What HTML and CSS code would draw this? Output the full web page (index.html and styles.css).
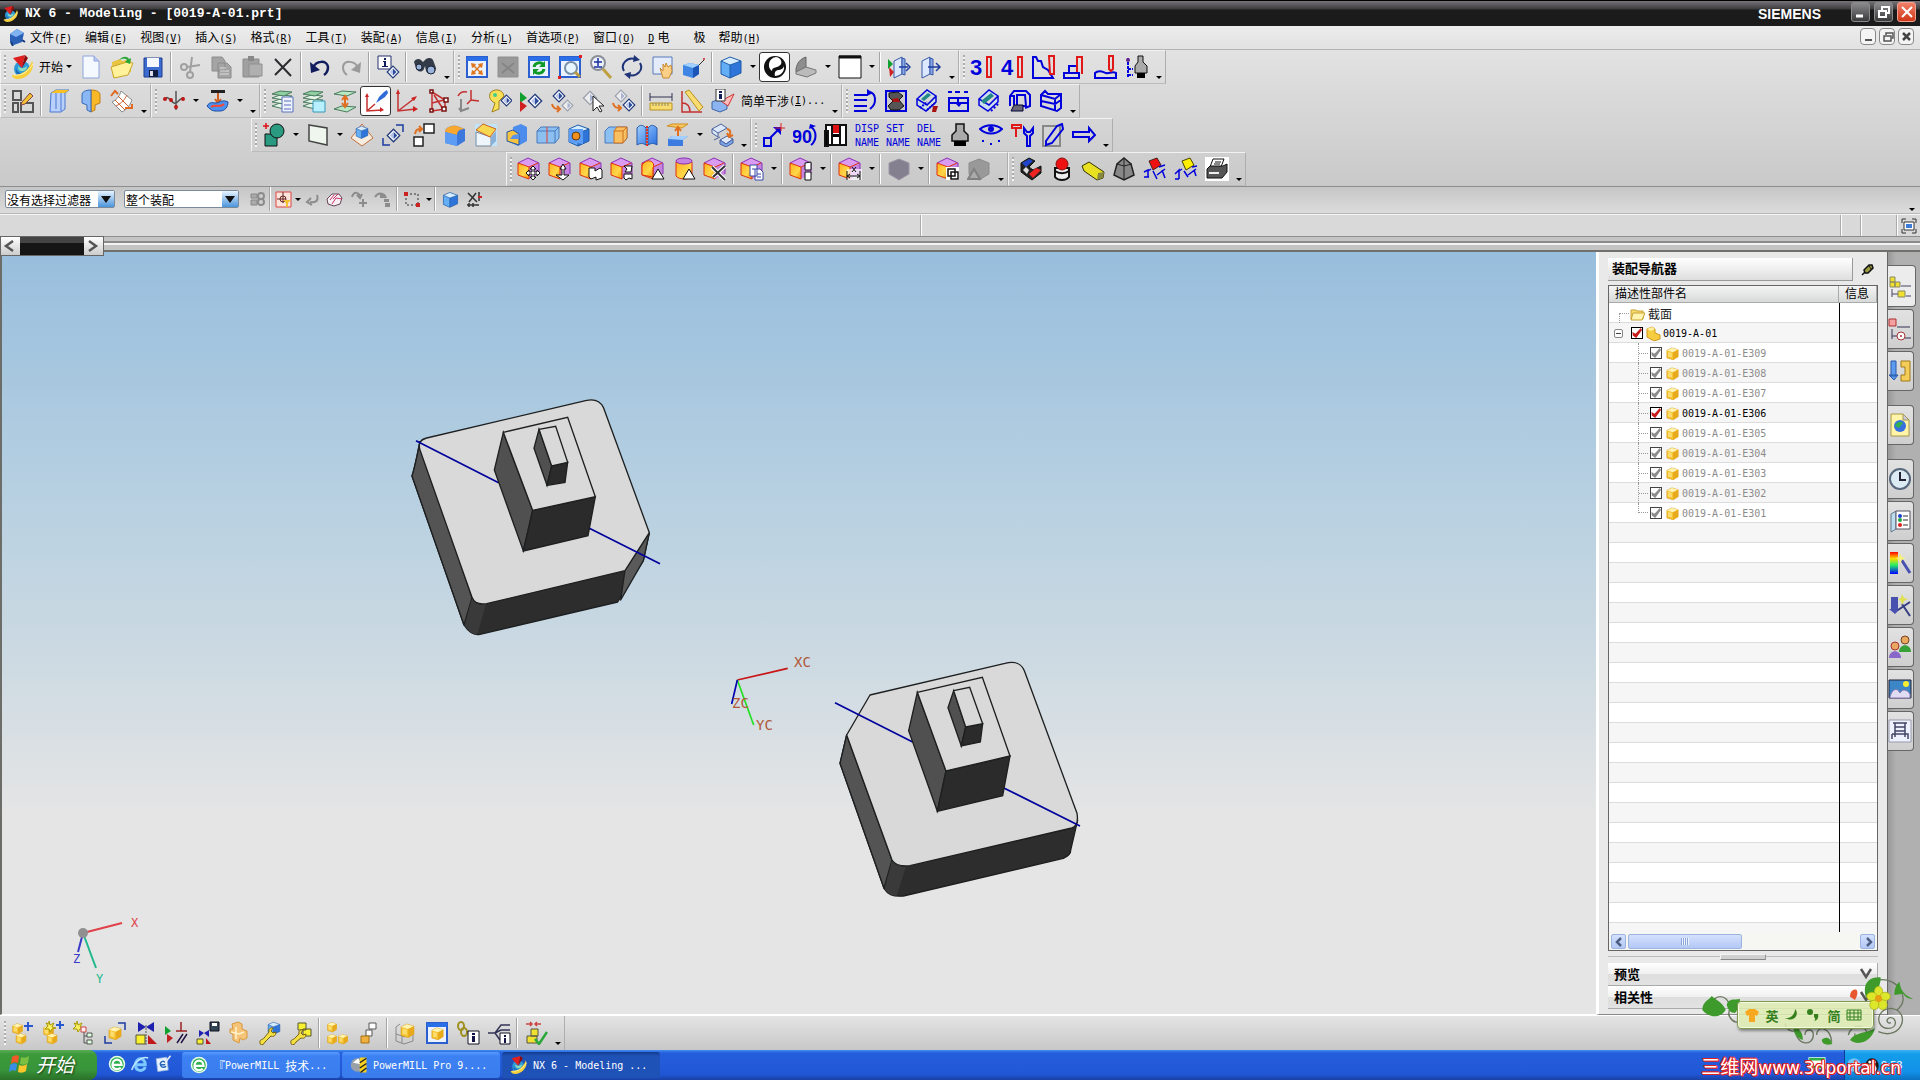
FILE: index.html
```html
<!DOCTYPE html>
<html lang="zh-CN">
<head>
  <meta charset="UTF-8">
  <meta name="viewport" content="width=device-width, initial-scale=1.0">
  <title>NX 6 - Modeling - [0019-A-01.prt]</title>
  <link rel="stylesheet" href="styles.css">
</head>
<body>
  <!-- shared icon parts, all drawn on a 24px grid -->
  <svg class="defs">
    <defs>
      <linearGradient id="gBlue" x1="0" y1="0" x2="1" y2="1"><stop offset="0" stop-color="#9fd0ff"/><stop offset="1" stop-color="#2a6fe0"/></linearGradient>
      <linearGradient id="gOrange" x1="0" y1="0" x2="1" y2="1"><stop offset="0" stop-color="#ffb020"/><stop offset=".6" stop-color="#ffd84a"/><stop offset="1" stop-color="#f09000"/></linearGradient>
      <linearGradient id="gRainbow" x1="0" y1="0" x2="0" y2="1"><stop offset="0" stop-color="#f00"/><stop offset=".3" stop-color="#fd0"/><stop offset=".6" stop-color="#2e6"/><stop offset="1" stop-color="#00f"/></linearGradient>
    </defs>
    <symbol id="nx" viewBox="0 0 24 24"><circle cx="11" cy="14" r="8" fill="#2f9ad8"/><path d="M5 13c1 5 6 7 11 4-1 4-4 5-7 4s-5-4-4-8z" fill="#1668b8"/><path d="M7 11c2 3 6 3 9 0 0 3-2 5-5 5s-4-2-4-5z" fill="#8fe0c0"/><path d="M1 20C10 21 18 15 21 6c4 8-5 18-14 18-4 0-6-2-6-4z" fill="#f6cf3a"/><path d="M3 20c8 1 15-4 19-11" fill="none" stroke="#fff4b0"/><path d="M2 3l12-3-3 13z" fill="#e02020"/><path d="M14 0l3 3-6 10z" fill="#8c0c0c"/></symbol>
    <symbol id="bcube" viewBox="0 0 24 24"><path d="M2 6l9 4v13l-9-4z" fill="#63aef5"/><path d="M11 10l11-4v12l-11 5z" fill="#2f74d8"/><path d="M2 6l9-4 11 4-11 4z" fill="#d6ecff"/><path d="M2 6l9-4 11 4v12l-11 5-9-4zM2 6l9 4 11-4M11 10v13" fill="none" stroke="#1d5cab"/></symbol>
    <symbol id="obox" viewBox="0 0 24 24"><path d="M1 6l10-5 11 5-10 4z" fill="#d99cf0"/><path d="M12 10l10-4v11l-10 5z" fill="#c583e2"/><path d="M1 6l11 4v12L1 18z" fill="url(#gOrange)"/><path d="M1 6l10-5 11 5v11" fill="none" stroke="#8b2fb5"/><path d="M1 6l11 4v12L1 18zM12 10l9-4" fill="none" stroke="#e03010"/></symbol>
    <symbol id="ycube" viewBox="0 0 24 24"><path d="M3 7l8-4 10 3v11l-8 5-10-3z" fill="#f5c430" stroke="#d79a14"/><path d="M3 7l8-4 10 3-8 4z" fill="#fff3b4"/><path d="M13 10l8-4v11l-8 5z" fill="#e9a91c"/><path d="M5 9l6 2v7l-6-1z" fill="#fbdc70"/></symbol>
    <symbol id="dia" viewBox="0 0 24 24"><path d="M12 2l10 10-10 10L2 12z" fill="#fff" stroke="#223a7a" stroke-width="2"/><path d="M12 6l6 6-6 6z" fill="#2c4c9c"/><path d="M12 6v12l-6-6z" fill="#b8c4e8"/></symbol>
    <symbol id="diag" viewBox="0 0 24 24"><path d="M12 2l10 10-10 10L2 12z" fill="#eee" stroke="#9aa0ae" stroke-width="2"/><path d="M12 6l6 6-6 6z" fill="#a8b2d4"/></symbol>
    <symbol id="layers" viewBox="0 0 24 24"><g fill="#e4f4e8" stroke="#4a7a5c"><path d="M1 17l8-3 12 1-8 5z"/><path d="M1 13l8-3 12 1-8 4z"/><path d="M1 9l8-3 12 1-8 4z"/><path d="M1 5l8-3 12 1-8 4z" fill="#8ed0a4"/></g></symbol>
    <symbol id="win" viewBox="0 0 24 24"><path d="M2 2h20v20H2z" fill="#eaf3ff" stroke="#2b5fd0" stroke-width="2"/><path d="M2 2h20v4H2z" fill="#2b6fe8"/></symbol>
    <symbol id="ie" viewBox="0 0 24 24"><circle cx="12" cy="12" r="11" fill="#e8ffe8"/><circle cx="12" cy="12" r="9" fill="#30b050"/><path d="M6 13h12c0-9-12-9-12 0 0 7 8 7 11 4" fill="none" stroke="#fff" stroke-width="3"/></symbol>
  </svg>

  <header class="titlebar">
    <svg class="app-icon"><use href="#nx"/></svg>
    <h1>NX 6 - Modeling - [0019-A-01.prt]</h1>
    <span class="brand">SIEMENS</span>
    <div class="win-buttons">
      <button title="Minimize"><svg><path d="M5 14h7" stroke="#fff" stroke-width="3"/></svg></button>
      <button title="Restore"><svg><path d="M5 9h7v6H5zM8 8V5h7v6h-2" fill="none" stroke="#fff" stroke-width="2"/></svg></button>
      <button class="close" title="Close"><svg><path d="M5 5l10 10M15 5L5 15" stroke="#fff" stroke-width="2"/></svg></button>
    </div>
  </header>

  <nav class="menubar">
    <svg class="menu-icon"><path d="M2 6l7-5 7 4-2 9-8 3-4-3z" fill="#2b62b8"/><path d="M2 6l7-5 7 4-8 4z" fill="#7fb2ee"/><path d="M3 14l2 4M14 12l3 2" stroke="#123a78" stroke-width="2"/></svg>
    <a href="#">文件<span>(<u>F</u>)</span></a>
    <a href="#">编辑<span>(<u>E</u>)</span></a>
    <a href="#">视图<span>(<u>V</u>)</span></a>
    <a href="#">插入<span>(<u>S</u>)</span></a>
    <a href="#">格式<span>(<u>R</u>)</span></a>
    <a href="#">工具<span>(<u>T</u>)</span></a>
    <a href="#">装配<span>(<u>A</u>)</span></a>
    <a href="#">信息<span>(<u>I</u>)</span></a>
    <a href="#">分析<span>(<u>L</u>)</span></a>
    <a href="#">首选项<span>(<u>P</u>)</span></a>
    <a href="#">窗口<span>(<u>O</u>)</span></a>
    <a href="#" class="wide"><span><u>D</u></span> 电</a>
    <a href="#">极</a>
    <a href="#">帮助<span>(<u>H</u>)</span></a>
    <div class="mdi-buttons">
      <button title="Minimize"><svg><path d="M4 11h7" stroke="#555" stroke-width="2"/></svg></button>
      <button title="Restore"><svg><path d="M4 7h7v5H4zM6 6V4h7v5h-1" fill="none" stroke="#555" stroke-width="1.5"/></svg></button>
      <button title="Close"><svg><path d="M4 4l7 7M11 4l-7 7" stroke="#444" stroke-width="2.5"/></svg></button>
    </div>
  </nav>

  <div class="dock">
    <div class="dock-row">
      <!-- standard -->
      <div class="toolbar">
        <button class="tool"><svg><use href="#nx"/></svg></button>
        <button class="label-tool start-app">开始<i></i></button>
        <button class="tool" title="New"><svg><path d="M4 1h11l5 5v17H4z" fill="#f4f8ff" stroke="#8fa4dc"/><path d="M15 1v5h5" fill="#b8c8f4" stroke="#8fa4dc"/></svg></button>
        <button class="tool" title="Open"><svg><path d="M2 7l8-3 2 2 9-2v13L3 23z" fill="#e8c440"/><path d="M1 12l16-5 6 1-5 12-14 3z" fill="#fff29a" stroke="#c9a42c"/><path d="M9 5c4-4 8-4 10-1l2-1-1 6-5-2 2-2c-2-2-5-1-8 0z" fill="#28a838"/></svg></button>
        <button class="tool" title="Save"><svg><path d="M3 3h18v19H3z" fill="#3c6cd0" stroke="#1e3c8c"/><path d="M6 3h12v9H6z" fill="#f4f8fc"/><path d="M8 15h9v7H8z" fill="#111c3c"/><path d="M9 16h3v5H9z" fill="#dde"/></svg></button>
        <i class="sep"></i>
        <button class="tool" title="Cut"><svg><g fill="none" stroke="#a0a0a0" stroke-width="2"><circle cx="6" cy="12" r="3"/><circle cx="12" cy="20" r="3"/><path d="M12 17L14 2M9 12l13-2"/></g></svg></button>
        <button class="tool" title="Copy"><svg><path d="M3 2h10l3 4v10H3zM9 8h9l4 4v11H9z" fill="#a4a4a4" stroke="#8c8c8c"/><path d="M11 13h6M11 16h9M11 19h9" stroke="#ddd"/></svg></button>
        <button class="tool" title="Paste"><svg><path d="M3 4h16v18H3z" fill="#a0a0a0" stroke="#8c8c8c"/><path d="M8 1h6v5H8z" fill="#888"/><path d="M9 9h13v12H9z" fill="#b0b0b0" stroke="#909090"/></svg></button>
        <button class="tool" title="Delete"><svg><path d="M4 4l16 17M20 4L4 20" stroke="#2c2c30" stroke-width="2"/></svg></button>
        <i class="sep"></i>
        <button class="tool" title="Undo"><svg><path d="M5 13c3-8 14-8 15-1 0 4-1 6-4 8" fill="none" stroke="#101c5c" stroke-width="2.5"/><path d="M2 7l1 11 9-3z" fill="#101c5c"/></svg></button>
        <button class="tool" title="Redo"><svg><path d="M19 13C16 5 5 5 4 12c0 4 1 6 4 8" fill="none" stroke="#9a9a9a" stroke-width="2"/><path d="M22 7l-1 11-9-3z" fill="#9a9a9a"/></svg></button>
        <i class="sep"></i>
        <button class="tool"><svg><path d="M2 1h13v13H2z" fill="#fff" stroke="#25306c"/><path d="M8 3h2v2H8zM7 6h3v5h2v1H6v-1h2V7H7z" fill="#101c5c"/><svg x="10" y="10" width="14" height="14"><use href="#dia"/></svg></svg></button>
        <i class="sep"></i>
        <button class="tool"><svg><path d="M1 7c1-3 5-4 7-2l2 2 3-3c3-2 6-1 7 1l3 8c0 6-8 8-10 3l-1-5-1 3c-2 4-7 3-8-1z" fill="#333a48"/><circle cx="18" cy="15" r="4" fill="#9ab4dc" stroke="#1c2434"/><circle cx="6" cy="12" r="3" fill="#9ab4dc" stroke="#1c2434"/></svg></button>
        <button class="more"></button>
      </div>
      <!-- view -->
      <div class="toolbar">
        <button class="tool" title="Fit"><svg><use href="#win"/><path d="M6 8l5 1-1 2 2 2 2-2-1-2 5-1-1 5-2-1-2 2 2 2 2-1 1 5-5-1 1-2-2-2-2 2 1 2-5 1 1-5 2 1 2-2-2-2-2 1z" fill="#e07820"/></svg></button>
        <button class="tool"><svg><path d="M2 2h20v20H2z" fill="#999" stroke="#909090"/><path d="M6 8l12 10M18 8L6 18" stroke="#868686" stroke-width="2"/></svg></button>
        <button class="tool"><svg><use href="#win"/><path d="M7 12c1-5 7-5 9-3M17 14c-1 5-7 5-9 3" fill="none" stroke="#109a28" stroke-width="3"/><path d="M18 6v6h-6zM6 20v-6h6z" fill="#109a28"/></svg></button>
        <button class="tool"><svg><use href="#win"/><circle cx="13" cy="13" r="6" fill="#e8f6ff" stroke="#7890a8" stroke-width="2"/><path d="M17 17l5 5" stroke="#b89a40" stroke-width="3"/><path d="M0 21h3v3H0zM21 0h3v3h-3z" fill="#e02020"/></svg></button>
        <button class="tool"><svg><circle cx="9" cy="8" r="7" fill="#eef2fa" stroke="#8a8f98" stroke-width="2"/><path d="M5 7h8M9 3v8M5 12h8" stroke="#1830a0" stroke-width="1.5"/><path d="M14 14l8 9" stroke="#bfa040" stroke-width="3"/></svg></button>
        <button class="tool"><svg><path d="M4 16C0 9 7 2 15 4M20 8c4 7-3 14-11 12" fill="none" stroke="#1f3478" stroke-width="2"/><path d="M14 0l6 5-7 2zM10 24l-6-5 7-2z" fill="#1f3478"/></svg></button>
        <button class="tool"><svg><path d="M2 2h19v17H2z" fill="#e4ecfc" stroke="#5878b8"/><path d="M9 13l3 3V9l2 3 1-4 2 4 3-2 1 6-3 7h-6z" fill="#fbcf88" stroke="#c88a30"/></svg></button>
        <button class="tool"><svg><path d="M1 10l7-2 9 2v9l-6 4-10-3z" fill="#3f86e4"/><path d="M1 10l7-2 9 2-6 3z" fill="#9fd0ff"/><path d="M17 10v9l-6 4V13z" fill="#1c54b8"/><path d="M17 10l5-5" stroke="#333"/><circle cx="22" cy="4" r="1" fill="#d02020"/></svg></button>
        <i class="sep"></i>
        <button class="tool"><svg><use href="#bcube"/></svg></button>
        <button class="dd"></button>
        <button class="tool on"><svg><circle cx="12" cy="12" r="11" fill="#111"/><path d="M13 2c6 1 7 7 3 9-3 2-7 1-7 5-5-3-4-13 4-14z" fill="#fff"/><path d="M21 11c1 6-4 10-9 10-1-4 1-6 4-6 3-1 4-1 5-4z" fill="#fff"/></svg></button>
        <button class="tool"><svg><path d="M2 14c1-6 4-10 10-12v10l-10 5z" fill="#8e8e8e" stroke="#666"/><path d="M2 17l10-5 10 3v3l-9 4-11-3z" fill="#bbb" stroke="#777"/></svg></button>
        <button class="dd"></button>
        <button class="tool"><svg><path d="M1 1h22v22H1z" fill="#fff" stroke="#111"/><path d="M1 2h22" stroke="#111" stroke-width="3"/></svg></button>
        <button class="dd"></button>
        <i class="sep"></i>
        <button class="tool"><svg><path d="M7 6l8-4v17l-8 4z" fill="#dce8ff" stroke="#3858a8"/><path d="M15 3l3 1v16l-3-1z" fill="#88a8e8" stroke="#3858a8"/><path d="M1 4l5 5-5 5z" fill="#10a030"/><path d="M2 12l5 5-4 5z" fill="#d02020"/><path d="M12 12h9M19 8l4 4-4 4" class="b1"/></svg></button>
        <button class="tool"><svg><path d="M4 6l8-4v17l-8 4z" fill="#dce8ff" stroke="#3858a8"/><path d="M12 3l3 1v16l-3-1z" fill="#88a8e8" stroke="#3858a8"/><path d="M10 12h11M18 8l4 4-4 4" class="b1"/></svg></button>
        <button class="more"></button>
      </div>
      <!-- electrode macros -->
      <div class="toolbar">
        <button class="tool"><svg><text x="0" y="20" class="num">3</text><path d="M17 2h4v20h-4z" class="r"/></svg></button>
        <button class="tool"><svg><text x="0" y="20" class="num">4</text><path d="M17 2h4v20h-4z" class="r"/></svg></button>
        <button class="tool"><svg><path d="M1 23V2h3l2 4h3l2 6 5 3 5 8z" class="b"/><path d="M17 1h5v18h-4z" class="r"/></svg></button>
        <button class="tool"><svg><path d="M1 23h15v-5H1zM6 18v-7h8v7" class="b"/><path d="M14 17V2h5v17" class="r"/></svg></button>
        <button class="tool"><svg><path d="M1 23v-5c4-4 8-1 11 0s6-2 10 0v5z" class="b"/><path d="M15 1h4v13l-2 2-2-2z" class="r"/></svg></button>
        <button class="tool"><svg><path d="M3 3v20M3 14h5M3 20h5" class="b" stroke-dasharray="3 1"/><circle cx="3" cy="5" r="2" fill="#628"/><path d="M13 1h5v6l4 4v7H10v-7l3-4z" fill="#aaa" class="k"/><path d="M12 18h8v5h-8z"/></svg></button>
        <button class="more"></button>
      </div>
    </div>

    <div class="dock-row">
      <!-- feature -->
      <div class="toolbar">
        <button class="tool"><svg><path d="M2 2h8v9H2zM2 14h5v9H2zM10 14h12v9H10z" fill="none" stroke="#555" stroke-width="2"/><path d="M11 13l8-9 3 3-8 8-4 1z" fill="#f0c030" stroke="#844"/></svg></button>
        <i class="sep"></i>
        <button class="tool"><svg><path d="M3 4l5-3h13l-4 3v16l-4 3H2z" fill="#b8d0fa" stroke="#4878d0"/><path d="M3 4l5-3h13l-4 3z" fill="#f8c020"/><path d="M8 4v16M13 4v18" stroke="#4878d0"/></svg></button>
        <button class="tool"><svg><path d="M12 1c6 0 9 2 9 5v8l-5 2v5l-4 2z" fill="#f8b828" stroke="#c08018"/><path d="M12 1C6 1 3 3 3 6v8l5 2v5l4 2z" fill="#8ab8f4" stroke="#3868b8"/></svg></button>
        <button class="tool"><svg><path d="M2 13C8 10 10 6 11 2l11 9c-2 6-6 10-10 12z" fill="#fff" stroke="#888"/><path d="M5 11l10 10M8 7l10 10M6 17C12 14 15 10 17 6" fill="none" stroke="#d06030"/><path d="M1 7l4-5 3 3M15 19h7v-4" stroke="#e06820" stroke-width="2" fill="none"/></svg></button>
        <button class="more"></button>
      </div>
      <!-- curves -->
      <div class="toolbar">
        <button class="tool"><svg><path d="M2 11c4-6 6 1 10 3s4-5 10-5M14 2v19" fill="none" stroke="#555" stroke-width="1.5"/><g fill="#c01818"><circle cx="3" cy="10" r="2"/><circle cx="9" cy="11" r="2"/><circle cx="21" cy="10" r="2"/><circle cx="14" cy="18" r="2"/></g></svg></button>
        <button class="dd"></button>
        <button class="tool"><svg><path d="M5 1h14v3H5z" fill="#222"/><path d="M12 4v8M9 10l3 4 3-4" stroke="#d06020" stroke-width="2" fill="none"/><path d="M1 17c3-5 6-3 9-3s6-4 12-1c0 5-3 9-8 9s-8 1-13-5z" fill="#4c90f0" stroke="#1c4ca0"/><path d="M5 18c4-3 9 1 13-3" fill="none" stroke="#f84830" stroke-width="2"/></svg></button>
        <button class="dd"></button>
        <button class="more"></button>
      </div>
      <!-- utility -->
      <div class="toolbar">
        <button class="tool"><svg><use href="#layers"/><path d="M11 8h11v15H11z" fill="#eef2ff" stroke="#5870b8"/><path d="M13 12h7M13 16h7M13 20h7" stroke="#5870b8"/></svg></button>
        <button class="tool"><svg><use href="#layers"/><path d="M11 12h12v11H11z" fill="#b8f0ff" stroke="#3898b8"/></svg></button>
        <button class="tool"><svg><path d="M1 5l8-3 14 1-9 4zM1 20l8-3 14 1-9 5z" fill="#b8e8c4" stroke="#4a7a5c"/><path d="M12 7v10M9 11l3-4 3 4M9 14l3 4 3-4" class="o1"/></svg></button>
        <button class="tool on"><svg><path d="M3 7v15l15-1M3 22l8-7" class="r1"/><path d="M3 4L1 8h4zM20 21l-4-3v5z" fill="#c22"/><path d="M12 14l3-6 5-5 3-2 1 3-3 4z" fill="#2f6cd8"/></svg></button>
        <button class="tool"><svg><path d="M3 3v19l18-2M3 22L20 9" class="r1"/><path d="M3 0L1 5h4zM23 20l-5-3v6zM22 7l-6 2 3 3z" fill="#c22"/></svg></button>
        <button class="tool"><svg><path d="M6 3v19M6 3l13 8M6 22l13-2M19 10v10M8 6l9 14M6 14l12-3" class="r1"/><g fill="#fff" stroke="#711" stroke-width="1.5"><path d="M4 1h3v3H4zM4 20h3v3H4zM18 9h4v4h-4zM16 18h4v4h-4z"/></g></svg></button>
        <button class="tool"><svg><path d="M14 1v10l8 1M14 11l-4 4M1 7c2-4 5-5 9-4" class="r1"/><path d="M4 10v12l8-3M4 22l-2-3" fill="none" stroke="#888" stroke-width="2"/></svg></button>
        <button class="tool"><svg><path d="M3 3c5-4 12-2 13 4l-5 5v8l-7 3 3-9c-5-2-7-7-4-11z" fill="#f8e058" stroke="#a08018"/><circle cx="7" cy="6" r="2" fill="#4c8"/><svg x="12" y="5" width="13" height="13"><use href="#dia"/></svg></svg></button>
        <button class="tool"><svg><path d="M1 3l7 6-7 5z" fill="#10a030"/><path d="M1 12l7 5-7 6z" fill="#d02020"/><svg x="8" y="4" width="16" height="16"><use href="#dia"/></svg></svg></button>
        <button class="tool"><svg><svg x="2" y="0" width="14" height="14"><use href="#dia"/></svg><svg x="11" y="10" width="13" height="13"><use href="#diag"/></svg><path d="M2 15c1 5 4 5 8 5M7 17l3 3-3 3" class="o1"/></svg></button>
        <button class="tool"><svg><svg x="1" y="1" width="16" height="16"><use href="#diag"/></svg><path d="M12 7v15l4-4 3 5 2-1-3-5h5z" fill="#fff" stroke="#222"/></svg></button>
        <button class="tool"><svg><svg x="2" y="0" width="14" height="14"><use href="#diag"/></svg><svg x="10" y="9" width="14" height="14"><use href="#dia"/></svg><path d="M1 14c1 5 4 5 8 5M6 16l3 3-3 3" class="o1"/></svg></button>
        <i class="sep"></i>
        <button class="tool"><svg><path d="M1 14h22v7H1z" fill="#f8dc70" stroke="#b89020"/><path d="M4 14v3M7 14v3M10 14v3M13 14v3M16 14v3M19 14v3" stroke="#886"/><path d="M1 8h22M1 4v8M23 4v8" stroke="#335" /></svg></button>
        <button class="tool"><svg><path d="M2 2v21h20M2 14c5 0 8 3 8 9" class="r1"/><path d="M5 3l4-2 14 17-4 4z" fill="#f8dc70" stroke="#b89020"/></svg></button>
        <button class="tool"><svg><path d="M1 13l7-3 8 3v7l-7 3-8-3z" fill="#8cb4f0" stroke="#3c64a8"/><path d="M10 12l13-7-6 12z" fill="#fbb" stroke="#c33"/><path d="M5 0h9v12H5z" fill="#fff" stroke="#333"/><path d="M8 2h3v2H8zM8 5h3v5H8z" fill="#101c5c"/></svg></button>
        <button class="label-tool clash">简单干涉<span>(<u>I</u>)...</span></button>
        <button class="more"></button>
      </div>
      <div class="toolbar">
        <button class="tool"><svg><path d="M1 6h14M1 11h13M1 17h13M1 22h13M15 3c9 0 9 12 2 17" class="b"/><path d="M14 0v7l6-3z" fill="#00d"/></svg></button>
        <button class="tool"><svg><path d="M2 2h20v20H2z" fill="#ccc" stroke="#0000dc" stroke-width="2"/><path d="M5 4l9-1 5 4-4 4 5 6-5 4H7l-3-4 5-5-4-4z" fill="#555" stroke="#111"/><path d="M8 10l6-1 2 4H9z" fill="#a11"/></svg></button>
        <button class="tool"><svg><path d="M2 10L12 1l9 6-9 9zM2 10v6l9 6 10-9V7" fill="#cdd" stroke="#0000dc" stroke-width="1.5"/><path d="M6 10l7-6 3 2-7 6z" fill="#288"/><path d="M5 19l7-6M12 21l8-7" class="b" stroke-dasharray="2 1"/><path d="M18 17h5l-2 6h-4z" fill="#a11"/></svg></button>
        <button class="tool"><svg><path d="M3 9h19v13H3zM3 14h19M2 3h4M9 3h5M18 3h4M12 9v7" class="b"/><path d="M9 14h7l-3 4z" fill="#00d"/></svg></button>
        <button class="tool"><svg><path d="M2 10L12 1l9 6-9 9zM2 10v6l9 6 10-9V7" fill="#cde" stroke="#0000dc" stroke-width="1.5"/><path d="M4 12l10-8 3 3L7 15z" fill="#288"/><path d="M14 22l8-8" class="b" stroke-dasharray="2 2"/></svg></button>
        <button class="tool"><svg><path d="M2 17V7l4-5h12l4 4v11l-5 2M2 7h4v9M9 16V6h8l1 11h-7" class="b"/><path d="M3 22l3-6h9v6z" fill="#667" stroke="#003"/></svg></button>
        <button class="tool"><svg><path d="M2 6l4-4 3 3h13v14l-4 3-16-5zM2 6l14 4 6-5M2 12l14 3 6-4M16 10v11" class="b"/></svg></button>
        <button class="more"></button>
      </div>
    </div>

    <div class="dock-row third">
      <div class="toolbar">
        <button class="tool"><svg><path d="M1 3h6M4 0v6" stroke="#d11" stroke-width="1.5"/><path d="M3 11h12v12H3z" fill="#2a9a80" stroke="#111"/><circle cx="15" cy="8" r="7" fill="#2a9a80" stroke="#111"/></svg></button>
        <button class="dd"></button>
        <button class="tool"><svg><path d="M3 2l18 3v17L3 18z" fill="#eef6ee" stroke="#444" stroke-width="1.5"/></svg></button>
        <button class="dd"></button>
        <button class="tool"><svg><path d="M1 15L12 1l11 14-11 8z" fill="#f6ece0" stroke="#c07040"/><svg x="5" y="2" width="14" height="14"><use href="#bcube"/></svg></svg></button>
        <button class="tool"><svg><svg x="5" y="5" width="15" height="15"><use href="#dia"/></svg><path d="M15 2h7v7M2 15v7h7" class="b1"/></svg></button>
        <button class="tool"><svg><path d="M12 1h10v9H12zM2 14h9v9H2z" fill="#fff" stroke="#222" stroke-width="1.5"/><path d="M3 11c1-5 3-5 6-5M7 3l3 3-3 3" class="o1"/></svg></button>
        <button class="tool"><svg><path d="M2 9c0-5 7-7 12-6l8 3v12l-8 5-12-3z" fill="#3c78dc"/><path d="M2 9c0-5 7-7 12-6l8 3c-5 0-8 2-8 6z" fill="#f8a830"/><path d="M2 9l12 3v11L2 20z" fill="#5c9cf4"/></svg></button>
        <button class="tool"><svg><path d="M1 1h22v22H1z" fill="#bfe4fb"/><path d="M2 9v14h15V14z" fill="#eef6fc" stroke="#789"/><path d="M17 14l5-6v10l-5 5z" fill="#8ab0d8"/><path d="M2 7l7-6 13 5-6 8z" fill="#f8d850" stroke="#d06020"/></svg></button>
        <button class="tool"><svg><path d="M2 9l6 3V4l8-3 6 3v14l-9 5-11-5z" fill="#4c8cec"/><path d="M2 9l6-2 6 4v11L2 18z" fill="#f8c440" stroke="#2858a0"/><path d="M8 12l6-1v5H5z" fill="#5a92e8"/></svg></button>
        <button class="tool"><svg><path d="M1 8l4-4h18v11l-4 5H1z" fill="#8cc0f0" stroke="#4878c0"/><path d="M1 8h18l4-4M19 8v12" fill="none" stroke="#4878c0"/><path d="M11 4v16" stroke="#e04030"/></svg></button>
        <button class="tool"><svg><use href="#bcube"/><path d="M2 6h14v15l-14-2z" fill="#5c9cf4"/><circle cx="9" cy="13" r="4" fill="#f09020" stroke="#6a3a10"/></svg></button>
        <i class="sep"></i>
        <button class="tool"><svg><path d="M1 8l4-4h18v11l-4 5H1z" fill="#8cc0f0" stroke="#4878c0"/><path d="M10 8l3-4h10v11l-4 5h-9z" fill="#f8c060" stroke="#d07020"/><path d="M10 8h9l4-4M19 8v12" stroke="#d07020" fill="none"/></svg></button>
        <button class="tool"><svg><path d="M2 5c3-4 6-3 9 0v17c-3-2-6-2-9 0zM13 5c3-4 6-3 9 0v17c-3-2-6-2-9 0z" fill="url(#gBlue)" stroke="#2858a8"/><path d="M12 3v20" stroke="#e03020" stroke-dasharray="2 1" stroke-width="2"/></svg></button>
        <button class="tool"><svg><path d="M1 3l5-2h16l-6 4z" fill="#f8c860" stroke="#d09020"/><path d="M12 5v9M9 8l3-4 3 4" class="o1"/><path d="M2 16l4-3h16l-5 4v6H2z" fill="#3c7ce0"/><path d="M2 16l4-3h16l-5 4z" fill="#a4d0ff"/></svg></button>
        <button class="dd"></button>
        <button class="tool"><svg><path d="M2 6l9-5 6 4-9 5zM2 6v4l6 4v-4M10 17l7-4 6 3-7 5zM4 17l6-3" fill="#dde8fa" stroke="#48609c"/><path d="M10 17v4l6 3 7-4v-4l-7 5z" fill="#7ca4e8" stroke="#48609c"/><path d="M17 6c4 1 4 4 2 7M17 10l2 4 4-2" class="o1"/></svg></button>
        <button class="more"></button>
      </div>
      <div class="toolbar">
        <button class="tool"><svg><path d="M2 15h7v8H2zM8 15l8-8" class="b"/><path d="M11 4h8v8z" fill="#00d"/><path d="M13 5h10M19 0v8" stroke="#d22"/></svg></button>
        <button class="tool"><svg><text x="-1" y="20" class="ninety">90</text><path d="M18 4c6 4 6 13 0 18" class="b"/><path d="M16 6l1-5 6 2z" fill="#00d"/></svg></button>
        <button class="tool"><svg><path d="M2 2h20v20H2z" fill="#fff" stroke="#111" stroke-width="2"/><path d="M1 8h3v15H1zM8 2v20M16 2v20" stroke="#111" stroke-width="2"/><path d="M9 2h6v8H9z" fill="#d11"/><path d="M9 11h6v3H9z"/></svg></button>
        <button class="tool"><svg class="words"><text x="0" y="9">DISP</text><text x="0" y="23">NAME</text></svg></button>
        <button class="tool"><svg class="words"><text x="0" y="9">SET</text><text x="0" y="23">NAME</text></svg></button>
        <button class="tool"><svg class="words"><text x="0" y="9">DEL</text><text x="0" y="23">NAME</text></svg></button>
        <button class="tool"><svg><path d="M8 1h8v7l4 4v6H4v-6l4-4z" fill="#aaa" stroke="#111" stroke-width="1.5"/><path d="M6 18h12v5H6z"/></svg></button>
        <button class="tool"><svg><path d="M1 6c6-5 16-5 22 0-6 6-16 6-22 0zM3 18h2M11 21h2M19 18h2" class="b"/><circle cx="12" cy="6" r="3" fill="#00d"/></svg></button>
        <button class="tool"><svg><path d="M2 2h9v3H2zM6 5v9" class="r"/><path d="M14 5v5l3 3v10h3V13l3-3V5l-3 4h-3z" class="b"/></svg></button>
        <button class="tool"><svg><path d="M2 3h17v20H2z" fill="none" stroke="#888" stroke-width="2"/><path d="M5 18L16 3l5-2 1 5-11 14-6 2z" class="b"/></svg></button>
        <button class="tool"><svg><path d="M1 9h16V5l6 7-6 6v-4H1z" class="b"/></svg></button>
        <button class="more"></button>
      </div>
    </div>

    <div class="dock-row fourth">
      <!-- synchronous modelling -->
      <div class="toolbar">
        <button class="tool"><svg><use href="#obox"/><path d="M16 9l3 3h-2v3h3v-2l3 3-3 3v-2h-3v3h2l-3 3-3-3h2v-3h-3v2l-3-3 3-3v2h3v-3h-2z" class="ov"/></svg></button>
        <button class="tool"><svg><use href="#obox"/><path d="M15 7l3 5h-2v6h5l-6 5-7-5h6v-6h-2z" class="ov"/></svg></button>
        <button class="tool"><svg><use href="#obox"/><path d="M10 11h6v3l5-3 2 2v8l-6 2v-3l-5 2-2-2z" class="ov"/></svg></button>
        <button class="tool"><svg><use href="#obox"/><path d="M14 9h8l-1 6h-6l2-3zM14 17h8v5l-3-1-3 2-2-2z" class="ov"/></svg></button>
        <button class="tool"><svg><use href="#obox"/><path d="M1 8c6-8 14-3 11 3v9L1 18z" fill="url(#gOrange)" stroke="#e03010"/><path d="M17 12l6 10H11z" class="ov"/></svg></button>
        <button class="tool"><svg><path d="M4 5v14c3 4 14 4 16 0V5z" fill="url(#gOrange)" stroke="#e03010"/><ellipse cx="12" cy="4" rx="8" ry="3" fill="#c583e2" stroke="#8b2fb5"/><path d="M17 12l6 10H11z" class="ov"/></svg></button>
        <button class="tool"><svg><use href="#obox"/><path d="M9 10l13 13M22 9L10 20" stroke="#fff" stroke-width="4"/><path d="M9 10l13 13M22 9L10 20" stroke="#333" stroke-width="2"/></svg></button>
        <i class="sep"></i>
        <button class="tool"><svg><use href="#obox"/><path d="M10 8h7v11h-7zM15 12h5l3 3v8h-8z" fill="#fff" stroke="#3848a8"/><path d="M12 12h3M17 17h4M17 20h4" stroke="#3848a8"/></svg></button>
        <button class="dd"></button>
        <i class="sep"></i>
        <button class="tool"><svg><use href="#obox"/><path d="M16 6l6-1v8h-6zM16 15h6v8h-6z" class="ov"/></svg></button>
        <button class="dd"></button>
        <i class="sep"></i>
        <button class="tool"><svg><use href="#obox"/><path d="M9 12h15v11H9z" fill="#fff" opacity=".7"/><path d="M9 14v9M22 14v9M9 19h13M12 17l-3 2 3 2M19 17l3 2-3 2M14 10l4 5M18 10l-4 5" fill="none" stroke="#111"/></svg></button>
        <button class="dd"></button>
        <i class="sep"></i>
        <button class="tool"><svg><path d="M2 6l10-4 10 4v11l-10 6-10-6z" fill="#85808f" stroke="#9c96a6"/></svg></button>
        <button class="dd"></button>
        <i class="sep"></i>
        <button class="tool"><svg><use href="#obox"/><path d="M10 10h13v13H10z" fill="#fff"/><path d="M12 12h7v7h-7zM15 15h7v7h-7z" fill="none" stroke="#111" stroke-width="1.5"/></svg></button>
        <button class="tool"><svg><path d="M2 6l10-4 10 4v11l-10 6-10-6z" fill="#999" stroke="#8c8c8c"/><path d="M7 12l6 10H1z" fill="#aaa" stroke="#808080" stroke-width="2"/></svg></button>
        <button class="more"></button>
      </div>
      <div class="toolbar">
        <button class="tool"><svg><path d="M2 6l8-5 6 3-6 6 4 3 8-4v7l-9 7-11-8z" fill="#222" stroke="#111"/><path d="M3 6l7-4 4 2-7 6z" fill="#24c"/><path d="M10 17l7-6 5 2-8 8z" fill="#e22"/><path d="M7 10l3 3-2 4-4-4z" fill="#ddd"/></svg></button>
        <button class="tool"><svg><path d="M5 11h14v9c-3 4-11 4-14 0z" fill="#eee" stroke="#111" stroke-width="2"/><circle cx="12" cy="7" r="6" fill="#e11" stroke="#811"/><path d="M5 14c4 3 10 3 14 0" stroke="#111" stroke-width="2" fill="none"/></svg></button>
        <button class="tool"><svg><path d="M1 9l7-4 15 10-1 6-6 2L3 14z" fill="#e8e020" stroke="#330"/><path d="M17 16l6-1-1 6-6 2z" fill="#884"/></svg></button>
        <button class="tool"><svg><path d="M12 1l7 6 3 11-10 5-10-5L5 7z" fill="#888" stroke="#222" stroke-width="1.5"/><path d="M12 1v8l8-2M12 9L5 7M12 9v14" fill="none" stroke="#222"/></svg></button>
        <button class="tool"><svg><path d="M6 4l8-3 4 7-8 5z" fill="#e11" stroke="#422"/><path d="M1 15l4-2v7M8 12l-3 2M14 18l8-6M10 14l4 8M16 10l6-2M19 13l3 8M1 20h5" fill="none" stroke="#0000dc" stroke-width="1.5"/></svg></button>
        <button class="tool"><svg><path d="M8 4l8-3 4 7-8 5z" fill="#fe0" stroke="#440"/><path d="M1 17l4-4v9M8 12l-3 2M14 18l8-6M10 14l4 6M18 10l5-1M20 13l2 6M1 22h4" fill="none" stroke="#0000dc" stroke-width="1.5"/></svg></button>
        <button class="tool paper"><svg><path d="M8 2h11l-3 8H5z" fill="#fff" stroke="#111"/><path d="M2 12l3-3h13l4-2v8l-5 6H2z" fill="#555" stroke="#111"/><path d="M4 16h10" stroke="#eee" stroke-width="2"/><path d="M10 5h6M9 7h6" stroke="#111"/></svg></button>
        <button class="more"></button>
      </div>
    </div>
  </div>

  <div class="selectionbar">
    <label class="combo filter"><select aria-label="选择过滤器"><option>没有选择过滤器</option></select></label>
    <label class="combo scope"><select aria-label="选择范围"><option>整个装配</option></select></label>
    <button class="small"><svg><path d="M2 3h6v4H2zM2 9h6v5H2zM8 8h3" fill="#aaa" stroke="#888"/><circle cx="12" cy="5" r="3" class="g"/><circle cx="12" cy="11" r="3" class="g"/></svg></button>
    <i class="sep"></i>
    <button class="small"><svg><path d="M1 1h15v15H1z" fill="#fbe4dc" stroke="#d44"/><path d="M8 1v11M2 8h9" stroke="#622"/><circle cx="8" cy="8" r="3" fill="none" stroke="#622"/><path d="M8 9h8l-3 3v4h-2v-4z" fill="#f0c030"/></svg></button>
    <button class="dd"></button>
    <button class="small"><svg><path d="M13 4c2 6-2 8-7 7M7 7l-4 4 5 3" class="g"/></svg></button>
    <button class="small wide"><svg><path d="M1 8l5-5h7l3 4-2 6-6 2-6-2z" fill="#f6f0f4" stroke="#645"/><path d="M6 13l4-6 6 1M4 9l4-5M7 8l5-5" fill="none" stroke="#c36"/></svg></button>
    <button class="small wide"><svg><path d="M2 6c2-6 7-5 8 0M7 4l3 3 2-4M9 12h8M13 8v8" class="g"/></svg></button>
    <button class="small wide"><svg><path d="M1 6c4-6 10-3 11 1" class="g"/><path d="M6 3h5v4H6zM10 8h5v3h-5zM11 12h5v4h-5z" fill="#8c8c8c"/></svg></button>
    <i class="sep"></i>
    <button class="small wide"><svg><path d="M2 3h12v11H2z" fill="none" stroke="#333" stroke-dasharray="2 2"/><path d="M0 1h4v4H0zM12 12h4v4h-4z" fill="#c22"/></svg></button>
    <button class="dd"></button>
    <i class="sep"></i>
    <button class="small wide"><svg><svg width="17" height="17"><use href="#bcube"/></svg></svg></button>
    <button class="small wide"><svg><path d="M2 2l9 9M10 2L3 11M13 1v9M1 14h12M7 12v4M3 12v4" fill="none" stroke="#333" stroke-width="1.5"/><path d="M12 6h4" stroke="#c22" stroke-width="2"/></svg></button>
    <button class="more"></button>
  </div>

  <div class="cueline">
    <span class="cue"></span><span class="status"></span><span class="slot"></span><span class="slot2"></span>
    <button title="Full screen"><svg><path d="M1 5V1h4M11 1h4v4M15 11v4h-4M5 15H1v-4" fill="none" stroke="#333"/><path d="M3 4h10v8H3z" fill="#fff" stroke="#333"/><path d="M5 6h6v4H5z" fill="#3c7cd8"/></svg></button>
  </div>

  <div class="railstrip">
    <div class="tabscroll">
      <button><svg><path d="M12 4L5 9l7 5"/></svg></button>
      <span></span>
      <button><svg><path d="M5 4l7 5-7 5"/></svg></button>
    </div>
  </div>

  <main>
    <!-- graphics window -->
    <section class="viewport">
      <svg class="scene">
        <svg x="388" y="118" width="290" height="290" viewBox="0 0 870 870">
          <g stroke="#1d1f20" stroke-width="4" stroke-linejoin="round">
            <path d="M90 215C78 270 75 290 66 318L222 765C235 785 250 797 270 793L683 696 760 572 778 488 705 600 280 700z" fill="#2d2d2d"/>
            <path d="M90 215C78 270 75 290 66 318L222 765 246 683z" fill="#545454"/>
            <path d="M778 488L705 600 692 690 760 572z" fill="#5a5a5a"/>
            <path d="M90 240C84 220 92 208 110 204L590 91C615 86 632 96 640 112L778 488 705 602 290 701C265 705 252 698 246 682z" fill="#d9d9d9"/>
          </g>
          <path d="M224 765C235 785 250 795 262 792L288 703C265 707 252 700 246 684z" fill="#3a3a3a"/>
          <path d="M78 212L326 338M598 475L810 581" stroke="#00009c" stroke-width="5"/>
          <g stroke="#1d1f20" stroke-width="4">
            <path d="M340 187L313 300 400 543 428 421z" fill="#505050"/>
            <path d="M428 421L616 380 594 497 400 543z" fill="#2b2b2b"/>
            <path d="M340 187L533 142 616 380 428 421z" fill="#d9d9d9"/>
            <path d="M447 178L432 235 471 346 485 288z" fill="#505050"/>
            <path d="M485 288L533 277 525 337 471 346z" fill="#2b2b2b"/>
            <path d="M447 178L497 169 533 277 485 288z" fill="#d9d9d9"/>
          </g>
        </svg>
        <svg x="708" y="388" width="390" height="280" viewBox="0 0 1170 840">
          <g stroke="#1d1f20" stroke-width="4" stroke-linejoin="round">
            <path d="M410 285L390 370 522 745C533 762 545 771 580 768L1060 655C1075 648 1083 642 1082 630L1103 540 1090 563 580 678z" fill="#2d2d2d"/>
            <path d="M410 285L390 370 522 745 546 660z" fill="#545454"/>
            <path d="M480 165L885 70C915 62 935 72 943 92L1101 520C1105 545 1100 560 1085 564L600 677C565 680 553 672 546 660L410 285z" fill="#d9d9d9"/>
          </g>
          <path d="M524 745C533 762 545 769 560 767L588 680C565 682 553 674 546 662z" fill="#3a3a3a"/>
          <path d="M375 188L608 306M880 443L1110 558" stroke="#00009c" stroke-width="5"/>
          <g stroke="#1d1f20" stroke-width="4">
            <path d="M622 157L596 272 682 514 708 393z" fill="#505050"/>
            <path d="M708 393L900 348 878 467 682 514z" fill="#2b2b2b"/>
            <path d="M622 157L817 112 900 348 708 393z" fill="#d9d9d9"/>
            <path d="M731 152L714 203 754 318 767 261z" fill="#505050"/>
            <path d="M767 261L818 251 811 306 754 318z" fill="#2b2b2b"/>
            <path d="M731 152L779 142 818 251 767 261z" fill="#d9d9d9"/>
          </g>
          <g stroke-width="5">
            <path d="M82 120L233 85" stroke="#c81414"/>
            <path d="M82 120L131 255" stroke="#20e020"/>
            <path d="M82 120L65 192" stroke="#0000b0"/>
          </g>
        </svg>
        <g class="wcs"><text x="792" y="415">XC</text><text x="754" y="478">YC</text><text x="730" y="456">ZC</text></g>
        <!-- view triad -->
        <g stroke-width="2">
          <path d="M81 681l39-10" stroke="#e04048"/><path d="M81 681l13 35" stroke="#20b88c"/><path d="M81 681l-5 19" stroke="#3838c8"/>
        </g>
        <circle cx="81" cy="681" r="5" fill="#909090"/>
        <g class="triad"><text x="129" y="675" fill="#e04048">X</text><text x="94" y="731" fill="#20b88c">Y</text><text x="71" y="711" fill="#3838c8">Z</text></g>
      </svg>
    </section>

    <!-- assembly navigator -->
    <aside class="navigator">
      <div class="nav-title">
        <h2>装配导航器</h2>
        <button title="Pin"><svg><path d="M4 8l5-5h3l1 3-5 5H5z" fill="#9a9a40" stroke="#111" stroke-width="1.5"/><path d="M9 4l3 4" stroke="#111"/><path d="M5 10l-3 3" stroke="#111" stroke-width="1.5"/></svg></button>
      </div>
      <div class="tree">
        <table>
          <thead><tr><th class="name">描述性部件名</th><th>信息</th></tr></thead>
          <tbody>
            <tr><td><div class="node section"><i class="twig"></i><svg><path d="M1 4h5l1 1h6v8H1z" fill="#f8e070" stroke="#c8a030"/><path d="M3 7h12l-3 7H1z" fill="#fff4b0" stroke="#c8a030"/></svg>截面</div></td><td></td></tr>
            <tr><td><div class="node root active"><button class="toggle"></button><input type="checkbox" id="p0" checked><svg><path d="M1 3l5-2 3 2v4l5 2v4l-6 2-7-4z" fill="#f6cc40" stroke="#d09818"/><path d="M1 3l5-2 3 2-4 2z" fill="#fff0a0"/></svg><label for="p0">0019-A-01</label></div></td><td></td></tr>
            <tr><td><div class="node"><i class="twig"></i><input type="checkbox" id="p9" checked><svg><use href="#ycube"/></svg><label for="p9">0019-A-01-E309</label></div></td><td></td></tr>
            <tr><td><div class="node"><i class="twig"></i><input type="checkbox" id="p8" checked><svg><use href="#ycube"/></svg><label for="p8">0019-A-01-E308</label></div></td><td></td></tr>
            <tr><td><div class="node"><i class="twig"></i><input type="checkbox" id="p7" checked><svg><use href="#ycube"/></svg><label for="p7">0019-A-01-E307</label></div></td><td></td></tr>
            <tr><td><div class="node active"><i class="twig"></i><input type="checkbox" id="p6" checked><svg><use href="#ycube"/></svg><label for="p6">0019-A-01-E306</label></div></td><td></td></tr>
            <tr><td><div class="node"><i class="twig"></i><input type="checkbox" id="p5" checked><svg><use href="#ycube"/></svg><label for="p5">0019-A-01-E305</label></div></td><td></td></tr>
            <tr><td><div class="node"><i class="twig"></i><input type="checkbox" id="p4" checked><svg><use href="#ycube"/></svg><label for="p4">0019-A-01-E304</label></div></td><td></td></tr>
            <tr><td><div class="node"><i class="twig"></i><input type="checkbox" id="p3" checked><svg><use href="#ycube"/></svg><label for="p3">0019-A-01-E303</label></div></td><td></td></tr>
            <tr><td><div class="node"><i class="twig"></i><input type="checkbox" id="p2" checked><svg><use href="#ycube"/></svg><label for="p2">0019-A-01-E302</label></div></td><td></td></tr>
            <tr><td><div class="node last"><i class="twig"></i><input type="checkbox" id="p1" checked><svg><use href="#ycube"/></svg><label for="p1">0019-A-01-E301</label></div></td><td></td></tr>
          </tbody>
        </table>
        <div class="hscroll">
          <button><svg><path d="M9 4L5 8l4 4" /></svg></button>
          <span class="thumb"><i></i></span>
          <button><svg><path d="M6 4l4 4-4 4" /></svg></button>
        </div>
      </div>
      <div class="splitter"><i></i></div>
      <button class="fold">预览<svg><path d="M2 4l5 8 5-8" /></svg></button>
      <button class="fold">相关性<svg><path d="M2 4l5 8 5-8" /></svg></button>
    </aside>

    <!-- resource bar -->
    <nav class="resources">
      <button class="active"><svg><path d="M2 3h5v5H2zM2 8h5v5H2zM7 8h5v5H7zM10 17h7v6h-7z" fill="#f0e030" stroke="#886"/><path d="M13 12h10M4 15v8M4 20h6M18 22h5" stroke="#446" fill="none"/></svg></button>
      <button><svg><path d="M1 2h7v7H1z" fill="#f4a0a0" stroke="#a33"/><path d="M9 10h13M4 12v10M4 19h5M17 21h6" stroke="#335" fill="none"/><circle cx="13" cy="19" r="4" fill="#fff" stroke="#a33"/><circle cx="13" cy="19" r="1" fill="#a33"/></svg></button>
      <button><svg><path d="M3 2h5v15H3zM1 16h9l-4 5z" fill="#5c9cf0" stroke="#2858a8"/><path d="M13 2h9v20h-9v-6h4V8h-4z" fill="#f4cc58" stroke="#a07818"/></svg></button>
      <button class="gap"><svg><path d="M3 1h12l6 6v16H3z" fill="#fff4a8" stroke="#a89848"/><path d="M15 1l6 6h-6z" fill="#c8c8e8" stroke="#a89848"/><circle cx="12" cy="13" r="6" fill="#3870e0"/><path d="M7 13c2-5 6-5 8-3l-4 5z" fill="#30b050"/></svg></button>
      <button class="gap"><svg><circle cx="12" cy="12" r="10" fill="#dceaf4" stroke="#58687c" stroke-width="2"/><path d="M12 5v8h6" fill="none" stroke="#223" stroke-width="2"/></svg></button>
      <button><svg><path d="M3 5l5-3v18l-5 3z" fill="#bde" stroke="#678"/><path d="M8 2h14v18H8z" fill="#fff" stroke="#556"/><path d="M15 7h5M15 11h5M15 16h5" stroke="#333"/><g><circle cx="12" cy="7" r="2" fill="#24c"/><circle cx="12" cy="11" r="2" fill="#2a4"/><circle cx="12" cy="16" r="2" fill="#d22"/></g></svg></button>
      <button><svg><path d="M2 1h8v22H2z" fill="url(#gRainbow)"/><path d="M13 8l9 14" stroke="#4850b0" stroke-width="3"/><path d="M12 2l2 4 4 1-4 2-2 4-1-4-3-2 3-1z" fill="#f6f080"/></svg></button>
      <button><svg><path d="M3 4h7v12H3zM1 16h11l-5 5z" fill="#4850b0"/><path d="M10 17l12-8M14 11l8 12" stroke="#353c80" stroke-width="2"/><path d="M14 1l2 4 4 1-4 2-2 4-1-4-3-2 3-1z" fill="#e0e050"/></svg></button>
      <button><svg><circle cx="17" cy="5" r="4" fill="#e8a860" stroke="#742"/><path d="M11 17c0-9 12-9 12 0z" fill="#38a038"/><circle cx="7" cy="11" r="4" fill="#e8a860" stroke="#a33"/><path d="M1 23c0-9 12-9 12 0z" fill="#8868c8"/></svg></button>
      <button><svg><path d="M1 3h22v18H1z" fill="#3c86c8" stroke="#223"/><path d="M2 20c2-8 7-10 10-4 3-5 7-3 10 1v4H2z" fill="#e0dcf4" stroke="#87a"/><circle cx="18" cy="7" r="3" fill="#f4ee30"/></svg></button>
      <button><svg><path d="M1 1h22v22H1z" fill="#eef2ff" stroke="#99a"/><path d="M5 4h14M7 4v14M17 4v14M7 8h10M7 12h10M4 15h16v5M4 15v5" fill="none" stroke="#446" stroke-width="1.5"/></svg></button>
    </nav>
  </main>

  <!-- assemblies toolbar -->
  <div class="bottombar">
    <div class="toolbar">
      <button class="tool"><svg><svg x="1" y="1" width="13" height="13"><use href="#ycube"/></svg><svg x="4" y="11" width="14" height="13"><use href="#ycube"/></svg><path d="M14 5h9M18 1v9" stroke="#2858d0" stroke-width="2"/></svg></button>
      <button class="tool"><svg><svg x="1" y="3" width="13" height="13"><use href="#ycube"/></svg><svg x="4" y="11" width="14" height="13"><use href="#ycube"/></svg><path d="M8 0l1 4 4-2-2 4 4 1-4 1-2 3-1-3-4 0 3-3-2-3 3 1z" fill="#f8f060" stroke="#a90"/><path d="M15 4h8M19 0v8" stroke="#2858d0" stroke-width="2"/></svg></button>
      <button class="tool"><svg><path d="M5 0l1 4 4-2-2 4 4 1-4 1-2 3-1-3-4 0 3-3-2-3 3 1z" fill="#f8f060" stroke="#a90"/><path d="M9 6h5v5H9z" fill="#fee" stroke="#c44"/><path d="M12 11v11h3M12 15h3" stroke="#555" fill="none"/><path d="M15 12h5v4h-5zM15 19h5v4h-5z" fill="#dfd" stroke="#555"/></svg></button>
      <button class="tool"><svg><svg x="4" y="4" width="16" height="16"><use href="#ycube"/></svg><path d="M15 2h7v7M2 15v7h7" class="b1"/></svg></button>
      <button class="tool"><svg><path d="M4 1l8 5-8 5zM20 1l-8 5 8 5z" fill="#2020b0"/><path d="M2 14h9v9H2z" fill="#f8f030" stroke="#553"/><path d="M14 14l9 9h-9z" fill="#c01818"/><path d="M12 4v20" stroke="#555" stroke-dasharray="2 1"/></svg></button>
      <button class="tool"><svg><path d="M0 5l6 5-6 4z" fill="#10a030"/><path d="M2 13l6 4-6 5z" fill="#c02020"/><path d="M16 1v9M11 10h11" stroke="#922" stroke-width="1.5"/><path d="M12 22l6-9M16 22l6-9" stroke="#214" stroke-width="1.5"/></svg></button>
      <button class="tool"><svg><path d="M14 1h9v9h-9z" fill="#345" stroke="#112"/><path d="M16 2h5v3h-5z" fill="#fff"/><path d="M3 9l5 3-5 4zM13 9l-5 3 5 4z" fill="#2020b0"/><path d="M1 18h6v5H1z" fill="#f8f030" stroke="#553"/><path d="M10 17l5 6h-5z" fill="#c01818"/></svg></button>
      <button class="tool"><svg><path d="M5 3l6-2 4 2v5l5 2v7l-4 2-3-2-1 5-6-3v-6l-3-1V8h3z" fill="#f6c478" stroke="#d8983c"/><path d="M9 6v12M4 11l8 2 5-2" stroke="#fff2cc" fill="none" stroke-width="1.5"/></svg></button>
      <button class="tool"><svg><svg x="9" y="0" width="14" height="14"><use href="#bcube"/></svg><path d="M2 22c-1-4 3-3 4-5l5-6c-1-3 2-5 4-4l-2 3 2 2 3-1c0 4-3 5-5 4l-6 6c-1 3-5 4-5 1z" fill="#f4e040" stroke="#776018"/></svg></button>
      <button class="tool"><svg><path d="M9 2h8v7H9zM14 8h8v7h-8z" fill="#f8f030" stroke="#553"/><path d="M2 22c-1-4 3-3 4-5l4-4c-1-3 2-5 4-4l-2 3 2 2 3-1c0 4-3 5-5 4l-5 4c-1 3-5 4-5 1z" fill="#f4e040" stroke="#776018"/></svg></button>
      <i class="sep"></i>
      <button class="tool"><svg><svg x="0" y="0" width="12" height="12"><use href="#ycube"/></svg><svg x="0" y="12" width="12" height="12"><use href="#ycube"/></svg><svg x="11" y="12" width="12" height="12"><use href="#ycube"/></svg></svg></button>
      <button class="tool"><svg><path d="M12 2h7v6h-7zM9 9h6v6H9z" fill="#fff" stroke="#555"/><path d="M4 15h8v7H4z" fill="#f0b040" stroke="#a67010"/></svg></button>
      <i class="sep"></i>
      <button class="tool"><svg><path d="M2 6v14l8 3 9-3V8M2 13l9 3M2 6l4-3M8 22V10" fill="none" stroke="#888"/><svg x="5" y="1" width="17" height="17"><use href="#ycube"/></svg></svg></button>
      <button class="tool"><svg><use href="#win"/><svg x="5" y="5" width="15" height="15"><use href="#ycube"/></svg></svg></button>
      <button class="tool"><svg><g fill="none" stroke="#a09020" stroke-width="2"><ellipse cx="5" cy="5" rx="3" ry="4"/><ellipse cx="8" cy="11" rx="3" ry="4"/></g><path d="M12 10h11v13H12z" fill="#fff" stroke="#112"/><path d="M16 12h3v2h-3zM16 15h3v6h-3z" fill="#114"/></svg></button>
      <button class="tool"><svg><path d="M1 12h7l6-8h9M8 12l6-3h9M8 12l5 7" fill="none" stroke="#335" stroke-width="1.5"/><path d="M13 12h10v11H13z" fill="#fff" stroke="#112"/><path d="M17 14h2v2h-2zM17 17h2v5h-2z" fill="#114"/></svg></button>
      <i class="sep"></i>
      <button class="tool"><svg><path d="M2 3h6M11 3h6M6 1l2 2-2 2M13 1l-2 2 2 2" fill="none" stroke="#c44" stroke-width="1.5"/><path d="M7 8h7v7H7zM3 15h10v7H3z" fill="#f0e030" stroke="#554"/><path d="M11 18l4 5 8-12" fill="none" stroke="#28a838" stroke-width="2.5"/></svg></button>
      <button class="more"></button>
    </div>
  </div>

  <footer class="taskbar">
    <button class="start"><svg><path d="M3 5c3-2 5-2 7-1l-1 7c-3-1-5-1-7 1z" fill="#f05a28"/><path d="M12 5c2 1 5 1 8-1l-1 7c-3 2-5 2-8 1z" fill="#7ac043"/><path d="M1 13c3-2 5-2 7-1l-1 7c-2-1-4-1-7 1z" fill="#3a8ee8"/><path d="M10 13c3 1 5 1 8-1l-1 7c-3 2-5 2-8 1z" fill="#fcc62a"/></svg>开始</button>
    <div class="quick">
      <button><svg viewBox="0 0 24 24"><use href="#ie"/></svg></button>
      <button><svg viewBox="0 0 24 24"><path d="M6 13h13c0-11-13-10-13 0 0 9 10 10 13 3" fill="none" stroke="#7cc8ff" stroke-width="4"/><path d="M1 20C5 8 16 1 23 4" fill="none" stroke="#bfe6ff" stroke-width="2"/></svg></button>
      <button><svg viewBox="0 0 24 24"><path d="M3 5l14-2 2 17-14 2z" fill="#e8f2ff" stroke="#9bd"/><path d="M9 13h6M15 10c-3-4-8 0-6 4 1 3 5 3 7 1" fill="none" stroke="#2868b8" stroke-width="2"/><path d="M15 10l7-9" stroke="#eee" stroke-width="2"/></svg></button>
    </div>
    <button class="task"><svg viewBox="0 0 24 24"><use href="#ie"/></svg><b>『</b>PowerMILL <b>技术</b>...</button>
    <button class="task"><svg viewBox="0 0 24 24"><circle cx="10" cy="12" r="9" fill="#9aa0a8"/><path d="M4 9l7-6 4 8z" fill="#fff"/><path d="M13 2h9v20h-9z" fill="#f4d020"/><path d="M13 9l9-6M13 16l9-6M14 22l8-6" stroke="#222" stroke-width="2"/></svg>PowerMILL Pro 9....</button>
    <button class="task current"><svg viewBox="0 0 24 24"><use href="#nx"/></svg>NX 6 - Modeling ...</button>
    <div class="lang"><svg viewBox="0 0 24 24"><path d="M1 2h22v15H1z" fill="#2fae48" stroke="#dff"/><path d="M5 6h14v7H5z" fill="#fff"/></svg></div>
    <div class="tray">
      <svg viewBox="0 0 24 24"><circle cx="12" cy="12" r="9" fill="#6cc4f8"/><path d="M15 7l-5 5 5 5" stroke="#fff" stroke-width="3" fill="none"/></svg>
      <svg viewBox="0 0 24 24"><ellipse cx="12" cy="13" rx="9" ry="10" fill="#1a1a1a"/><ellipse cx="12" cy="17" rx="6" ry="6" fill="#fff"/><circle cx="9" cy="8" r="2" fill="#fff"/><circle cx="15" cy="8" r="2" fill="#fff"/><path d="M7 11h10l-5 3z" fill="#f8a020"/></svg>
      <time>9:53</time>
    </div>
    <div class="watermark"><b>三维网</b>www.3dportal.cn</div>
  </footer>

  <!-- floating input method bar -->
  <div class="ime">
    <svg viewBox="21 45 639 219">
      <g fill="none" stroke="#6c7860" stroke-width="4">
        <path d="M50 140C50 100 100 100 105 140M100 160c5 20 20 30 30 25M130 130c-30 0-40 40-10 55"/>
        <path d="M550 60c60-10 100 60 55 90M550 215c70 30 100-60 40-70-50 0-50 60-10 60 30 0 25-35 5-32-15 5-8 20 3 15"/>
        <path d="M300 200c0 60 55 60 55 25 0-20-25-20-25 0M365 225c0-30 40-25 45 20M460 225c10-40 60-30 55 0-10 25-40 15-35-5M270 190c5 25 30 30 45 15"/>
      </g>
      <path d="M465 110c0-15 10-25 20-20 5 10 0 20-5 30z" fill="#e85830"/>
      <g fill="#3f9a2c">
        <path d="M22 150c0-25 20-30 28-42 10 10 35 20 42 42-20 30-55 20-70 0z"/>
        <path d="M95 135c5-20 20-15 40-18 0 20-5 30-15 42-15 0-20-10-25-24z"/>
        <path d="M512 110c-10-40 10-60 45-58 0 30-15 55-45 58zM598 105c0-20 5-30 15-40 5 20 5 35 42 52-30 0-25-20-35-15zM295 205c20 0 30 15 28 35-15-5-25-15-28-35zM380 240c10-10 25-10 32 12-20 5-30 0-32-12zM465 240c15-25 55-20 75-35-10 40-50 55-75 35z"/>
      </g>
    </svg>
    <div class="ime-bar">
      <button><svg><path d="M1 4l4-3h6l4 3-2 4-2-1v7H5V7L3 8z" fill="#f6a820"/></svg></button>
      <button>英</button>
      <button><svg><path d="M11 1c5 5-1 14-10 9 5 1 10-3 10-9z" fill="#35801c"/></svg></button>
      <button><svg><circle cx="4" cy="4" r="3"  fill="#35801c"/><path d="M8 6h4c1 4-1 7-4 7 2-2 1-3 0-4z" fill="#35801c"/></svg></button>
      <button>简</button>
      <button><svg><path d="M1 2h14v10H1zM1 5h14M1 9h14M4 2v10M8 2v10M12 2v10" fill="none" stroke="#35801c"/></svg></button>
    </div>
    <svg class="bloom" viewBox="0 0 72 72"><g fill="#dce62a" stroke="#a8b010" stroke-width="2"><ellipse cx="36" cy="16" rx="12" ry="15"/><ellipse cx="55" cy="30" rx="15" ry="12"/><ellipse cx="48" cy="54" rx="13" ry="14"/><ellipse cx="24" cy="54" rx="13" ry="14"/><ellipse cx="17" cy="30" rx="15" ry="12"/></g><circle cx="36" cy="36" r="10" fill="#e8a010"/></svg>
  </div>
</body>
</html>
```
FILE: styles.css
```css
* {
  box-sizing: border-box;
}
body {
  margin: 0;
  height: 100vh;
  display: flex;
  flex-direction: column;
  overflow: hidden;
  background: #d4d4d4;
  color: #000;
  font-family: "Liberation Sans", "Noto Sans CJK SC", sans-serif;
  font-size: 12px;
}
button {
  flex: none;
  margin: 0;
  padding: 0;
  border: 0;
  background: none;
  color: inherit;
  font: inherit;
}
svg {
  display: block;
  flex: none;
}
.defs {
  position: absolute;
  width: 0;
  height: 0;
}
a {
  color: inherit;
  text-decoration: none;
}

/* title bar */
.titlebar {
  flex: none;
  height: 26px;
  display: flex;
  align-items: center;
  padding: 0 4px 0 3px;
  border-top: 1px solid #000;
  background: linear-gradient(#77747a, #3c3b3d 8px, #1b1b1b 9px, #1b1b1b);
  color: #fff;
}
.app-icon {
  width: 16px;
  height: 16px;
}
.titlebar h1 {
  margin: 0 auto 0 6px;
  font: bold 13px "Liberation Mono", monospace;
}
.brand {
  margin-right: 30px;
  font-weight: bold;
  font-size: 14px;
}
.win-buttons {
  display: flex;
  gap: 4px;
  margin-bottom: 4px;
}
.win-buttons button {
  width: 19px;
  height: 20px;
  border: 1px solid #8a8a8a;
  border-radius: 3px;
  background: linear-gradient(#8b8b8e, #3a3a3c);
  overflow: hidden;
}
.win-buttons svg {
  width: 20px;
  height: 20px;
  margin: -1px;
}
.win-buttons .close {
  border-color: #f0a090;
  background: linear-gradient(#f08068, #d03818);
}

/* menu */
.menubar {
  flex: none;
  height: 24px;
  display: flex;
  align-items: center;
  gap: 13px;
  padding: 0 6px 2px 8px;
  border-bottom: 1px solid #b4b4b4;
  background: linear-gradient(#ececec, #e2e2e2);
}
.menubar a {
  white-space: pre;
}
.menubar span,
.clash span {
  font: 10px "DejaVu Sans Mono", monospace;
}
.menubar .wide {
  margin-right: 11px;
  word-spacing: normal;
}
.menu-icon {
  width: 18px;
  height: 18px;
  margin-right: -9px;
}
.mdi-buttons {
  display: flex;
  gap: 3px;
  margin-left: auto;
}
.mdi-buttons button {
  width: 16px;
  height: 17px;
  border: 1px solid #888;
  border-radius: 4px;
  background: #f4f4f4;
}
.mdi-buttons svg {
  width: 15px;
  height: 15px;
}

/* toolbars */
.dock {
  flex: none;
  border-bottom: 1px solid #8e8e8e;
  background: linear-gradient(#e2e2e2, #c9c9c9);
}
.dock-row {
  display: flex;
  height: 34px;
}
.third {
  margin-left: 251px;
}
.fourth {
  margin-left: 506px;
}
.toolbar {
  display: flex;
  align-items: center;
  height: 34px;
  padding-bottom: 1px;
  border-top: 1px solid #f2f2f2;
  border-left: 1px solid #f2f2f2;
  border-right: 1px solid #aeaeae;
  border-bottom: 1px solid #bcbcbc;
}
.toolbar::before {
  content: "";
  width: 2px;
  height: 24px;
  margin: 0 1px 0 3px;
  background: repeating-linear-gradient(#aaa, #aaa 2px, #f4f4f4 2px, #f4f4f4 4px);
}
.tool {
  width: 31px;
  height: 30px;
  display: flex;
  align-items: center;
  justify-content: center;
}
.tool > svg {
  width: 24px;
  height: 24px;
}
.tool.on {
  border: 1px solid #333;
  border-radius: 3px;
  background: #fff;
}
.tool.paper svg {
  background: #fff;
}
.sep {
  flex: none;
  width: 2px;
  height: 30px;
  margin: 0 2px;
  border-left: 1px solid #a4a4a4;
  border-right: 1px solid #fff;
}
.dd + .sep {
  margin-left: 1px;
}
.dd,
.more {
  width: 13px;
  height: 24px;
  display: flex;
  align-items: center;
  justify-content: center;
}
.more {
  align-items: flex-end;
}
.dd::after,
.more::after,
.label-tool i {
  content: "";
  border: 3px solid transparent;
  border-top-color: #000;
  border-bottom: 0;
}
.label-tool {
  display: flex;
  align-items: center;
  white-space: nowrap;
}
.start-app {
  width: 37px;
  padding-left: 1px;
  gap: 3px;
}
.clash {
  width: 90px;
  padding-left: 3px;
}
.b { fill: none; stroke: #0000dc; stroke-width: 2; }
.b1 { fill: none; stroke: #1c3ca0; stroke-width: 1.5; }
.r { fill: none; stroke: #e01818; stroke-width: 2; }
.r1 { fill: none; stroke: #c43030; stroke-width: 1.5; }
.o1 { fill: none; stroke: #e07020; stroke-width: 2; }
.g { fill: none; stroke: #8c8c8c; stroke-width: 2; }
.k { stroke: #111; }
.ov { fill: #fff; stroke: #111; stroke-width: 1; }
.num,
.ninety {
  font: bold 22px "Liberation Sans", sans-serif;
  fill: #0000dc;
}
.ninety {
  font-size: 18px;
}
.words {
  font: 10px "DejaVu Sans Mono", monospace;
  fill: #0000dc;
}

/* selection bar */
.selectionbar {
  flex: none;
  height: 27px;
  display: flex;
  align-items: center;
  padding: 0 2px 2px 5px;
  border-bottom: 1px solid #b8b8b8;
  background: linear-gradient(#c6c6c6, #dcdcdc);
}
.combo {
  position: relative;
  display: flex;
  height: 18px;
  margin-right: 9px;
}
.combo select {
  width: 100%;
  appearance: none;
  padding: 0 1px;
  border: 1px solid #7a8a9a;
  border-radius: 2px;
  background: #fff;
  color: #000;
  font: 12px "Noto Sans CJK SC", sans-serif;
  line-height: 15px;
}
.combo::before {
  content: "";
  position: absolute;
  right: 1px;
  top: 1px;
  width: 16px;
  height: 16px;
  background: linear-gradient(#e6f4ff, #4c94dc);
}
.combo::after {
  content: "";
  position: absolute;
  right: 4px;
  top: 6px;
  border: 5px solid transparent;
  border-top: 7px solid #111;
  border-bottom: 0;
}
.filter {
  width: 110px;
}
.scope {
  width: 115px;
  margin-right: 8px;
}
.small {
  width: 20px;
}
.small.wide {
  width: 24px;
}
.small svg {
  width: 17px;
  height: 17px;
  margin: auto;
}
.selectionbar .dd {
  width: 9px;
}
.selectionbar .more {
  margin-left: auto;
}
.selectionbar .sep {
  height: 24px;
}

/* cue line */
.cueline {
  flex: none;
  height: 22px;
  display: flex;
  background: #d9d9d9;
  border-top: 1px solid #f4f4f4;
}
.cueline span {
  border-right: 1px solid #fff;
  box-shadow: inset -1px 0 #aaa;
}
.cue {
  width: 48%;
}
.status {
  flex: 1;
}
.slot {
  width: 20px;
}
.slot2 {
  width: 36px;
}
.cueline button {
  padding: 0 3px;
}
.cueline svg {
  width: 16px;
  height: 16px;
}

.railstrip {
  position: relative;
  z-index: 1;
  flex: none;
  height: 16px;
  border-top: 1px solid #8e8e8e;
  border-bottom: 2px solid #70706c;
  background: linear-gradient(#c4c4c4 4px, #8a8a8a 4px, #8a8a8a 6px, #f2f2f2 6px, #f2f2f2 8px, #c4c4c4 8px);
}
.tabscroll {
  position: absolute;
  left: 0;
  top: -1px;
  display: flex;
  width: 104px;
  height: 20px;
  border: 1px solid #666;
}
.tabscroll button {
  width: 19px;
  background: linear-gradient(#fff, #ccc);
}
.tabscroll svg {
  width: 18px;
  height: 18px;
}
.tabscroll path {
  fill: none;
  stroke: #555;
  stroke-width: 2.5;
}
.tabscroll span {
  flex: 1;
  border-top: 6px solid #444;
  background: #151515;
}

/* main area */
main {
  flex: 1;
  min-height: 0;
  display: flex;
}
.viewport {
  flex: 1;
  border-left: 2px solid #6c6c68;
  border-bottom: 1px solid #fff;
  background: linear-gradient(#98bedd, #b5cfe1 30%, #cbd9e2 52%, #e5e5e5 74%);
}
.scene {
  width: 100%;
  height: 100%;
}
.wcs {
  font: 14px "DejaVu Sans Mono", monospace;
  fill: #b05838;
}
.triad {
  font: 12px "DejaVu Sans Mono", monospace;
}

.navigator {
  width: 291px;
  display: flex;
  flex-direction: column;
  padding: 6px 9px 5px 9px;
  border-left: 3px solid #fff;
  border-bottom: 1px solid #888;
  background: #e9e9e9;
}
.nav-title {
  display: flex;
  height: 23px;
  margin-bottom: 4px;
}
.nav-title h2 {
  flex: 1;
  margin: 0;
  padding-left: 4px;
  border-right: 1px solid #999;
  border-bottom: 1px solid #999;
  background: linear-gradient(#fff, #dedede);
  font-size: 13px;
  line-height: 22px;
}
.nav-title button {
  padding: 0 2px 0 7px;
}
.nav-title svg {
  width: 16px;
  height: 16px;
}
.tree {
  flex: 1;
  min-height: 0;
  display: flex;
  flex-direction: column;
  border: 1px solid #666;
  background:
    linear-gradient(#000, #000) 230px 17px / 1px calc(100% - 35px) no-repeat,
    repeating-linear-gradient(#fff 0 19px, #dcdcdc 19px 20px, #f6f6f6 20px 39px, #dcdcdc 39px 40px) 0 17px;
}
.tree table {
  width: 100%;
  border-collapse: separate;
  border-spacing: 0;
  table-layout: fixed;
}
.tree th {
  height: 17px;
  padding: 0 0 0 6px;
  border-right: 1px solid #aaa;
  border-bottom: 1px solid #aaa;
  background: linear-gradient(#f4f4f4, #d8dada);
  font-weight: normal;
  line-height: 15px;
  text-align: left;
  white-space: nowrap;
}
.tree .name {
  width: 230px;
}
.tree td {
  height: 20px;
  padding: 0;
}
.node {
  display: flex;
  align-items: center;
  height: 20px;
  color: #8c8c8c;
}
.node label {
  font: 10px "DejaVu Sans Mono", monospace;
}
.node svg {
  width: 15px;
  height: 15px;
  margin: 0 2px 0 3px;
}
.section {
  color: #222;
}
.section svg {
  margin: 0 3px 0 1px;
}
.active {
  color: #000;
}
.twig {
  position: relative;
  width: 12px;
  height: 20px;
  margin-left: 29px;
  border-left: 1px dotted #999;
}
.twig::after {
  content: "";
  position: absolute;
  left: 0;
  top: 10px;
  width: 9px;
  border-top: 1px dotted #999;
}
.last .twig {
  height: 10px;
  margin-bottom: 10px;
}
.last .twig::after {
  top: 9px;
}
.section .twig {
  width: 10px;
  height: 10px;
  margin: 10px 0 0 10px;
}
.section .twig::after {
  top: 0;
}
.toggle {
  width: 9px;
  height: 9px;
  margin: 0 8px 0 5px;
  border: 1px solid #888;
  border-radius: 2px;
  background: linear-gradient(#444, #444) center / 5px 1px no-repeat #fff;
}
.node input {
  appearance: none;
  flex: none;
  width: 12px;
  height: 12px;
  margin: 0;
  border: 1px solid #444;
  background: #fff;
}
.node input::before {
  content: "";
  display: block;
  height: 10px;
  background: #8c8c8c;
  clip-path: polygon(4% 40%, 35% 58%, 88% 0, 100% 20%, 42% 100%, 8% 76%);
}
.node.active input {
  border-color: #000;
}
.node.active input::before {
  background: #c81c1c;
}
.hscroll {
  display: flex;
  height: 17px;
  margin-top: auto;
  padding: 1px 2px;
  background: #f6f6f2;
}
.hscroll button,
.thumb {
  height: 15px;
  border: 1px solid #9cb4e0;
  border-radius: 2px;
  background: linear-gradient(#d4e0fc, #b4c8f6);
}
.hscroll button {
  width: 15px;
}
.hscroll button:last-child {
  margin-left: auto;
}
.hscroll svg {
  width: 14px;
  height: 14px;
  margin-top: -2px;
}
.hscroll path,
.fold path {
  fill: none;
  stroke: #4d6185;
  stroke-width: 2.5;
}
.thumb {
  width: 43%;
  margin-left: 2px;
  display: flex;
  justify-content: center;
}
.thumb i {
  width: 8px;
  height: 7px;
  margin-top: 3px;
  background: repeating-linear-gradient(90deg, #8ca6dc 0 1px, #eef4fe 1px 2px);
}
.splitter {
  display: flex;
  align-items: center;
  justify-content: center;
  height: 12px;
  background: linear-gradient(#bbb, #bbb) 0 5px / 100% 1px no-repeat;
}
.splitter i {
  width: 46px;
  height: 6px;
  border: 1px solid #f4f4f4;
  border-right-color: #999;
  border-bottom-color: #888;
  background: #d0d0d0;
}
.fold {
  display: flex;
  align-items: center;
  justify-content: space-between;
  height: 23px;
  padding: 0 4px 2px 6px;
  border-right: 1px solid #aaa;
  border-bottom: 1px solid #aaa;
  background: linear-gradient(#fff, #f0f0f0 50%, #dedede 50%, #e2e2e2);
  font-weight: bold;
  font-size: 13px;
}
.fold svg {
  width: 14px;
  height: 16px;
}
.fold path {
  stroke: #555;
}

.resources {
  width: 33px;
  display: flex;
  flex-direction: column;
  gap: 2px;
  padding-top: 13px;
  border-left: 1px solid #666;
  background: linear-gradient(90deg, #999, #b0b0b0 8px);
}
.resources button {
  width: 26px;
  height: 40px;
  display: flex;
  align-items: center;
  border: 1px solid #666;
  border-left: 0;
  border-radius: 0 4px 4px 0;
  background: linear-gradient(#e2e2e2, #cfcfcf);
}
.resources .active {
  width: 28px;
  height: 42px;
  background: #ececec;
}
.resources .gap {
  margin-top: 12px;
}
.resources svg {
  width: 24px;
  height: 24px;
}

.bottombar {
  flex: none;
  height: 35px;
  border-top: 1px solid #fff;
  background: linear-gradient(#e4e4e4, #c8c8c8);
}
.bottombar .toolbar {
  width: max-content;
  border-top: 0;
  border-left: 0;
  border-bottom: 0;
}
.bottombar .toolbar::before {
  margin: 0 0 0 4px;
}

/* taskbar */
.taskbar {
  position: relative;
  flex: none;
  height: 30px;
  display: flex;
  background: linear-gradient(#3f8cf3, #245edb 3px, #2157d7 24px, #1941a5);
  color: #fff;
  font: 10px "DejaVu Sans Mono", "Noto Sans CJK SC", monospace;
}
.start {
  width: 97px;
  display: flex;
  align-items: center;
  gap: 5px;
  padding: 0 0 3px 9px;
  border-radius: 0 8px 8px 0;
  background: linear-gradient(#5eac56, #3c9a3a 4px, #38943a 20px, #2a7028);
  font: italic 19px "Noto Sans CJK SC", sans-serif;
  text-shadow: 1px 1px 2px #143c10;
}
.start svg {
  width: 22px;
  height: 24px;
}
.quick {
  display: flex;
  align-items: center;
  gap: 5px;
  padding: 0 10px 2px 11px;
}
.quick svg,
.task svg,
.tray svg {
  width: 18px;
  height: 18px;
}
.task {
  width: 158px;
  height: 26px;
  display: flex;
  align-items: center;
  margin: 2px 2px 0 0;
  padding-left: 8px;
  border-radius: 3px;
  background: linear-gradient(#5a9bff, #3c81f3 4px, #3a7cec);
  white-space: pre;
}
.task svg {
  margin-right: 5px;
}
.task b {
  font: 12px "Noto Sans CJK SC", sans-serif;
}
.task.current {
  background: linear-gradient(#153a8c, #1e52b7 4px);
}
.lang {
  margin-left: auto;
  padding: 6px 18px 0 0;
}
.lang svg {
  width: 18px;
  height: 18px;
}
.tray {
  width: 76px;
  display: flex;
  align-items: center;
  border-left: 1px solid #0d3c94;
  background: linear-gradient(#3cb0f4, #139ee9 4px, #1290e8 22px, #0c70c0);
}
.tray time {
  font: 11px "Liberation Sans", sans-serif;
}
.watermark {
  position: absolute;
  right: 19px;
  top: 5px;
  color: #fff;
  font: 17px/22px "DejaVu Sans", "Noto Sans CJK SC", sans-serif;
  text-shadow: 1px 0 #e02020, -1px 0 #e02020, 0 1px #e02020, 0 -1px #e02020, 1px 1px #e02020, -1px -1px #e02020;
}
.watermark b {
  font: 19px/22px "Noto Sans CJK SC", sans-serif;
}

/* input method bar floats over the window */
.ime {
  position: absolute;
  right: 5px;
  bottom: 32px;
  width: 213px;
  height: 73px;
  z-index: 2;
}
.ime > svg {
  width: 213px;
  height: 73px;
}
.ime-bar {
  position: absolute;
  left: 35px;
  top: 26px;
  width: 137px;
  height: 28px;
  display: flex;
  align-items: center;
  justify-content: space-between;
  padding: 0 11px 0 6px;
  border: 1px solid #7d9a50;
  border-radius: 4px;
  background: rgba(222, 236, 178, 0.85);
  box-shadow: inset 0 0 0 1px #f4fae0, 1px 2px 3px rgba(0, 0, 0, 0.4);
  color: #35801c;
  font: bold 13px "Noto Sans CJK SC", sans-serif;
}
.ime-bar svg {
  width: 16px;
  height: 14px;
}
.ime .bloom {
  position: absolute;
  left: 164px;
  top: 11px;
  width: 25px;
  height: 25px;
}
```
